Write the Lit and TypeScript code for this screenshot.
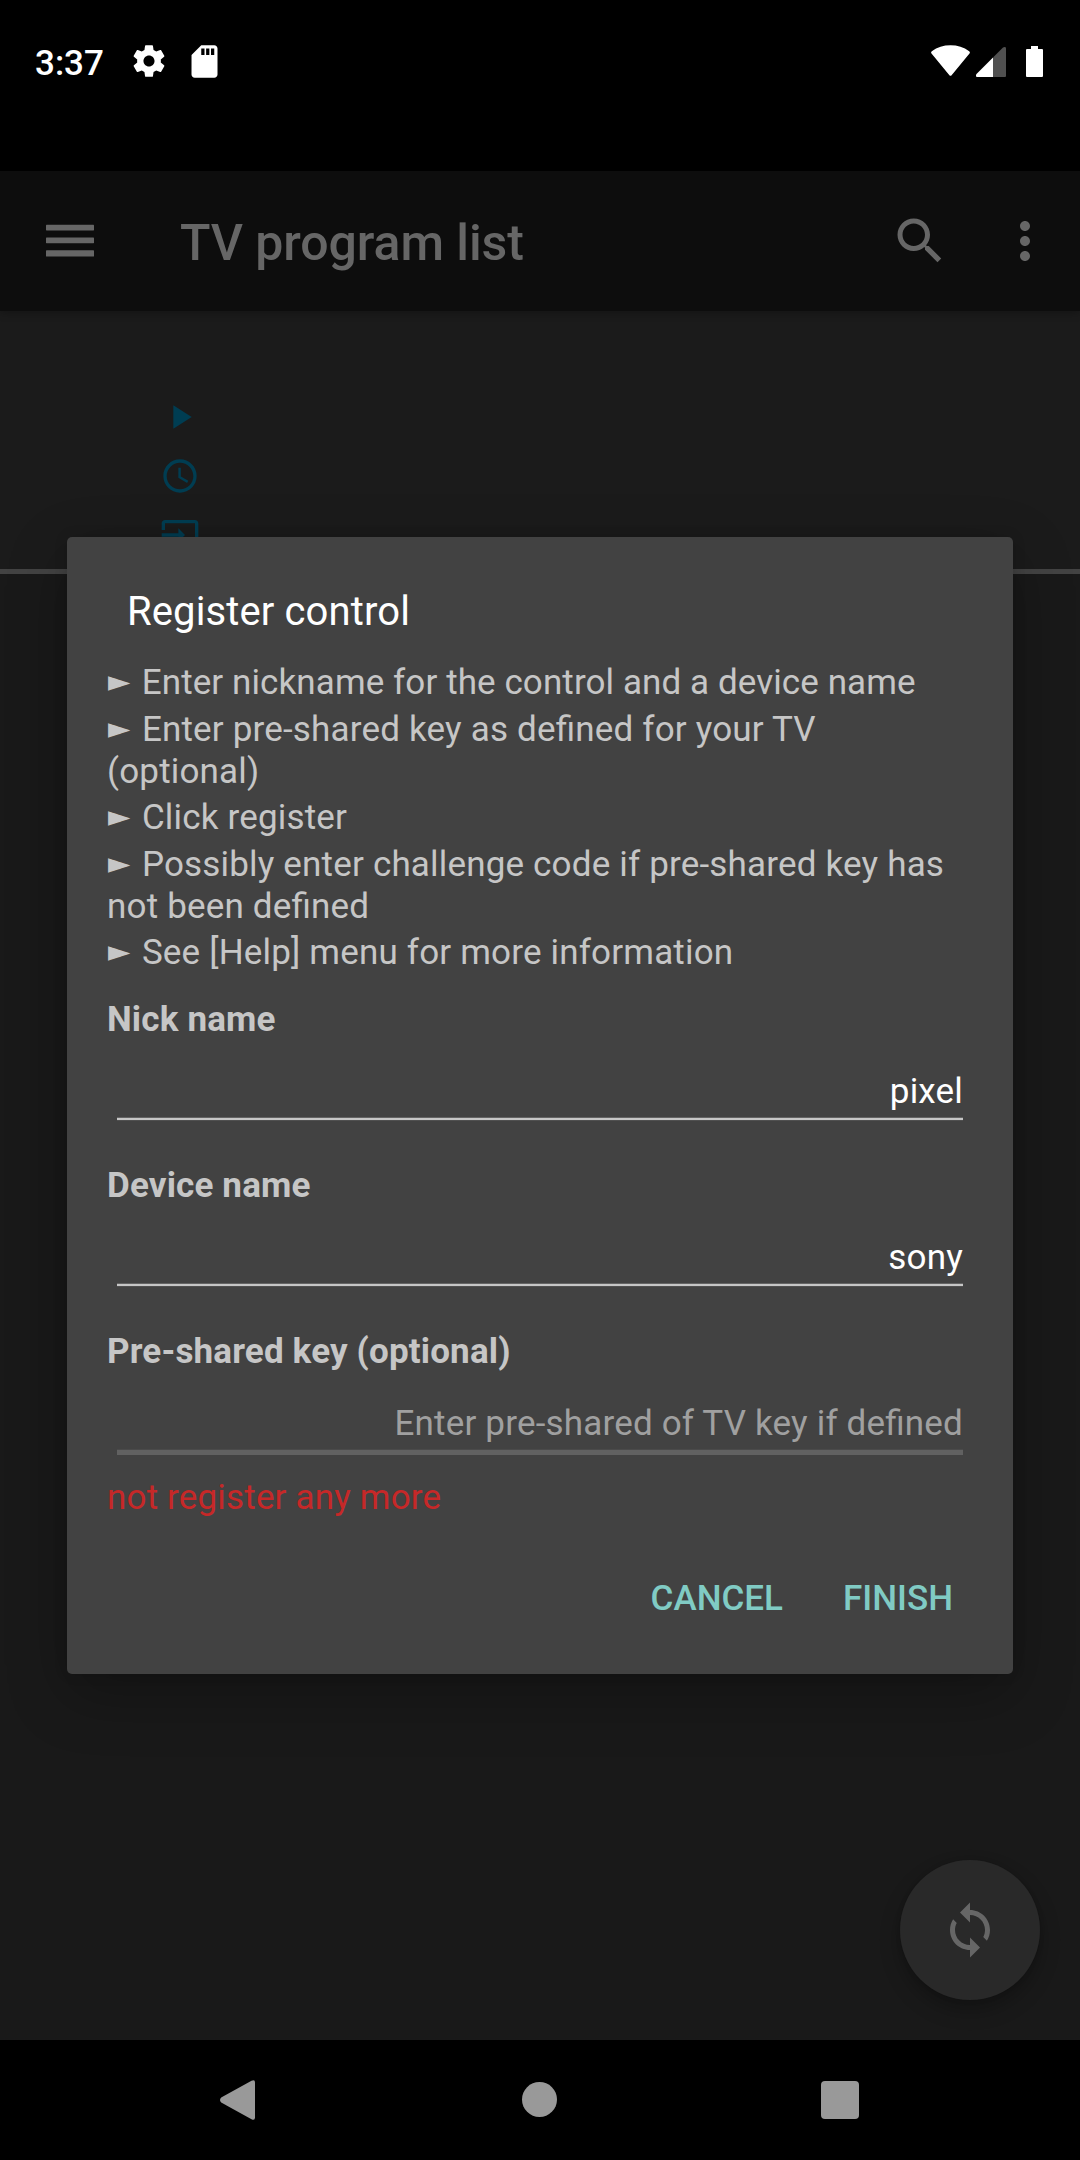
import { LitElement, html, css, svg } from "lit";
import { customElement, property } from "lit/decorators.js";

const ICONS: Record<string, string> = {
  gear: "M19.43 12.98c.04-.32.07-.64.07-.98s-.03-.66-.07-.98l2.11-1.65c.19-.15.24-.42.12-.64l-2-3.46c-.12-.22-.39-.3-.61-.22l-2.49 1c-.52-.4-1.08-.73-1.69-.98l-.38-2.65C14.46 2.18 14.25 2 14 2h-4c-.25 0-.46.18-.49.42l-.38 2.65c-.61.25-1.17.59-1.69.98l-2.49-1c-.23-.09-.49 0-.61.22l-2 3.46c-.13.22-.07.49.12.64l2.11 1.65c-.04.32-.07.65-.07.98s.03.66.07.98l-2.11 1.65c-.19.15-.24.42-.12.64l2 3.46c.12.22.39.3.61.22l2.49-1c.52.4 1.08.73 1.69.98l.38 2.65c.03.24.24.42.49.42h4c.25 0 .46-.18.49-.42l.38-2.65c.61-.25 1.17-.59 1.69-.98l2.49 1c.23.09.49 0 .61-.22l2-3.46c.12-.22.07-.49-.12-.64l-2.11-1.65zM12 15.5c-1.93 0-3.5-1.57-3.5-3.5s1.57-3.5 3.5-3.5 3.5 1.57 3.5 3.5-1.57 3.5-3.5 3.5z",
  sdCard: "M18 2h-8L4.02 8 4 20c0 1.1.9 2 2 2h12c1.1 0 2-.9 2-2V4c0-1.1-.9-2-2-2zm-6 6h-2V4h2v4zm3 0h-2V4h2v4zm3 0h-2V4h2v4z",
  search: "M15.5 14h-.79l-.28-.27C15.41 12.59 16 11.11 16 9.5 16 5.91 13.09 3 9.5 3S3 5.91 3 9.5 5.91 16 9.5 16c1.61 0 3.09-.59 4.23-1.57l.27.28v.79l5 4.99L20.49 19l-4.99-5zm-6 0C7.01 14 5 11.99 5 9.5S7.01 5 9.5 5 14 7.01 14 9.5 11.99 14 9.5 14z",
  more: "M12 8c1.1 0 2-.9 2-2s-.9-2-2-2-2 .9-2 2 .9 2 2 2zm0 2c-1.1 0-2 .9-2 2s.9 2 2 2 2-.9 2-2-.9-2-2-2zm0 6c-1.1 0-2 .9-2 2s.9 2 2 2 2-.9 2-2-.9-2-2-2z",
  play: "M8 5v14l11-7z",
  clock: "M11.99 2C6.47 2 2 6.48 2 12s4.47 10 9.99 10C17.52 22 22 17.52 22 12S17.52 2 11.99 2zM12 20c-4.42 0-8-3.58-8-8s3.58-8 8-8 8 3.58 8 8-3.58 8-8 8zm.5-13H11v6l5.25 3.15.75-1.23-4.5-2.67z",
  input: "M21 3.01H3c-1.1 0-2 .9-2 2V9h2V4.99h18v14.03H3V15H1v4.01c0 1.1.9 1.98 2 1.98h18c1.1 0 2-.88 2-1.98v-14c0-1.11-.9-2-2-2zM11 16l4-4-4-4v3H1v2h10v3z",
  sync: "M12 4V1L8 5l4 4V6c3.31 0 6 2.69 6 6 0 1.01-.25 1.97-.7 2.8l1.46 1.46C19.54 15.03 20 13.57 20 12c0-4.42-3.58-8-8-8zm0 14c-3.31 0-6-2.69-6-6 0-1.01.25-1.97.7-2.8L5.24 7.74C4.46 8.97 4 10.43 4 12c0 4.42 3.58 8 8 8v3l4-4-4-4v3z",
};

@customElement("material-icon")
class MaterialIcon extends LitElement {
  @property() name = "";

  static styles = css`
    :host { display: block; flex: none; width: 60px; height: 60px; }
    .glyph { display: block; width: 100%; height: 100%; fill: currentColor; }
  `;

  render() {
    return html`<svg class="glyph" viewBox="0 0 24 24">${svg`<path d=${ICONS[this.name]}></path>`}</svg>`;
  }
}

@customElement("status-bar")
class StatusBar extends LitElement {
  static styles = css`
    :host {
      display: flex; align-items: flex-start; justify-content: space-between;
      box-sizing: border-box; height: 171px; padding: 42px 36px 0 35px;
      background: #000; color: #fff;
    }
    .group { display: flex; align-items: center; height: 38px; }
    .time { width: 95px; padding-top: 6px; font: 500 35px/42px Roboto, sans-serif; }
    .small { width: 38px; height: 38px; }
    .card { margin-left: 17px; width: 39px; height: 39px; }
    .signals { display: block; }
  `;

  render() {
    return html`
      <div class="group">
        <span class="time">3:37</span>
        <material-icon class="small" name="gear"></material-icon>
        <material-icon class="card" name="sdCard"></material-icon>
      </div>
      <svg class="signals" width="114" height="40" viewBox="930 42 114 40" fill="#fff">
        <path d="M931.3 53.2Q930.6 52 931.8 51.2Q940 45.3 950.5 45.3Q961 45.3 969.2 51.2Q970.4 52 969.7 53.2L951.6 75.2Q950.5 76.4 949.4 75.2Z"></path>
        <path d="M993 57.5V77H977Q976 77 976 76V74.5Z"></path>
        <path fill="#505050" d="M993 57.5L1003 47.6Q1004 46.8 1005 47Q1006 47.2 1006 48.3V76Q1006 77 1005 77H993Z"></path>
        <path d="M1031 46H1038V49H1042Q1043 49 1043 50V76Q1043 77 1042 77H1027Q1026 77 1026 76V50Q1026 49 1027 49H1031Z"></path>
      </svg>
    `;
  }
}

@customElement("app-toolbar")
class AppToolbar extends LitElement {
  static styles = css`
    :host {
      display: flex; align-items: center; box-sizing: border-box; height: 140px;
      padding: 0 25px 0 46px; background: #0d0d0d; color: #666;
      box-shadow: 0 2px 8px rgba(0, 0, 0, 0.28); position: relative;
    }
    .menu { display: block; flex: none; margin-right: 86px; }
    .title { flex: 1; margin: 0; font: 500 50px/58px Roboto, sans-serif; padding-top: 4px; letter-spacing: -0.08px; }
    .more { margin-left: 45px; }
  `;

  render() {
    return html`
      <svg class="menu" width="48" height="34" viewBox="0 0 48 34" fill="#666">
        <rect y="0.8" width="48" height="5.6" rx="0.6"></rect>
        <rect y="13.6" width="48" height="5.6" rx="0.6"></rect>
        <rect y="26.3" width="48" height="6.2" rx="0.6"></rect>
      </svg>
      <h1 class="title">TV program list</h1>
      <material-icon name="search"></material-icon>
      <material-icon class="more" name="more"></material-icon>
    `;
  }
}

@customElement("form-field")
class FormField extends LitElement {
  @property() label = "";
  @property() value = "";
  @property() hint = "";

  static styles = css`
    :host { display: block; font: 400 35px/42px Roboto, sans-serif; font-feature-settings: "liga" 1; }
    .label { font-weight: 700; color: #c6c6c6; letter-spacing: 0.16px; }
    .box { margin: 30px 0 0 10px; text-align: right; color: #fff; letter-spacing: 0.18px; }
    .line { margin: 5px 0 0; height: 2px; background: #c6c6c6; box-shadow: 0 -1px #646464, 0 1px #505050; }
    .hint { color: #a0a0a0; }
    .idle { height: 5px; background: #616161; box-shadow: 0 -1px #4a4a4a; }
  `;

  render() {
    return html`
      <div class="label">${this.label}</div>
      <div class="box">
        ${this.value
          ? html`<div>${this.value}</div><div class="line"></div>`
          : html`<div class="hint">${this.hint}</div><div class="line idle"></div>`}
      </div>
    `;
  }
}

@customElement("register-dialog")
class RegisterDialog extends LitElement {
  private steps = [
    { lines: ["Enter nickname for the control and a device name"], tight: true },
    { lines: ["Enter pre-shared key as defined for your TV", "(optional)"] },
    { lines: ["Click register"] },
    { lines: ["Possibly enter challenge code if pre-shared key has", "not been defined"] },
    { lines: ["See [Help] menu for more information"] },
  ];

  static styles = css`
    :host {
      display: flex; flex-direction: column; box-sizing: border-box;
      width: 946px; height: 1137px; padding: 51px 50px 0 40px; border-radius: 5px;
      background: #424242; color: #c6c6c6; font: 400 35px/42px Roboto, sans-serif;
      font-feature-settings: "liga" 1;
      box-shadow: 0 20px 60px rgba(0, 0, 0, 0.26), 0 0 14px rgba(0, 0, 0, 0.12);
    }
    .title { margin: 0 0 26px 20px; font: 400 40px/48px Roboto, sans-serif; letter-spacing: 0.12px; color: #fff; }
    .steps { margin: 0 0 20px; padding: 0; list-style: none; letter-spacing: 0.18px; }
    .step { box-sizing: border-box; min-height: 47px; padding-bottom: 4px; }
    .tight { letter-spacing: 0.09px; }
    .row { height: 42px; white-space: nowrap; }
    .arrow {
      display: inline-block; box-sizing: border-box; width: 26px; height: 30px; padding-left: 1px;
      font: 29px/30px "DejaVu Sans", sans-serif; vertical-align: 3px;
    }
    .field { height: 166px; }
    .last { height: auto; }
    .error { margin-top: 22px; color: #c62828; letter-spacing: 0.17px; }
    .actions { display: flex; justify-content: flex-end; gap: 60px; margin: 59px 10px 0 0; color: #80cbc4; font-weight: 500; }
  `;

  render() {
    return html`
      <h2 class="title">Register control</h2>
      <ul class="steps">
        ${this.steps.map(
          (s) => html`<li class="step ${s.tight ? "tight" : ""}">
            ${s.lines.map((line, i) => html`<div class="row">${i === 0 ? html`<span class="arrow">►</span> ` : ""}<span>${line}</span></div>`)}
          </li>`,
        )}
      </ul>
      <form-field class="field" label="Nick name" value="pixel"></form-field>
      <form-field class="field" label="Device name" value="sony"></form-field>
      <form-field class="field last" label="Pre-shared key (optional)" hint="Enter pre-shared of TV key if defined"></form-field>
      <div class="error">not register any more</div>
      <div class="actions"><span>CANCEL</span><span>FINISH</span></div>
    `;
  }
}

@customElement("nav-bar")
class NavBar extends LitElement {
  static styles = css`
    :host {
      display: flex; align-items: center; justify-content: space-between;
      box-sizing: border-box; height: 120px; padding: 0 221px 0 220px; background: #000; position: relative;
    }
    .key { display: block; fill: #999; }
  `;

  render() {
    return html`
      <svg class="key" width="36" height="40" viewBox="0 0 36 40">
        <path d="M1.2 17.6L31.5 0.8Q35 -0.8 35 2.5V37.5Q35 40.8 31.5 39.2L1.2 22.4Q-1.2 20 1.2 17.6Z"></path>
      </svg>
      <svg class="key" width="37" height="36" viewBox="0 0 37 36"><circle cx="19.5" cy="17.5" r="17.5"></circle></svg>
      <svg class="key" width="38" height="38" viewBox="0 0 38 38"><rect width="38" height="38" rx="4"></rect></svg>
    `;
  }
}

@customElement("app-root")
class AppRoot extends LitElement {
  static styles = css`
    :host {
      display: flex; flex-direction: column; position: relative; overflow: hidden;
      width: 1080px; height: 2160px; background: #191919; font-family: Roboto, sans-serif;
    }
    .details {
      display: flex; flex-direction: column; gap: 19px; box-sizing: border-box; height: 263px;
      padding: 86px 0 0 160px; border-bottom: 5px solid #434343; background: #1b1b1b; color: #003d52;
    }
    .mark { width: 40px; height: 40px; }
    .list { flex: 1; }
    .fab {
      position: absolute; right: 40px; bottom: 160px; width: 140px; height: 140px;
      display: flex; align-items: center; justify-content: center; border-radius: 50%;
      background: #292929; color: #666;
      box-shadow: 0 10px 20px rgba(0, 0, 0, 0.26), 0 0 5px rgba(0, 0, 0, 0.14);
    }
    .dialog { position: absolute; left: 67px; top: 537px; }
  `;

  render() {
    return html`
      <status-bar></status-bar>
      <app-toolbar></app-toolbar>
      <section class="details">
        <material-icon class="mark" name="play"></material-icon>
        <material-icon class="mark" name="clock"></material-icon>
        <material-icon class="mark" name="input"></material-icon>
      </section>
      <main class="list"></main>
      <div class="fab"><material-icon name="sync"></material-icon></div>
      <nav-bar></nav-bar>
      <register-dialog class="dialog"></register-dialog>
    `;
  }
}
